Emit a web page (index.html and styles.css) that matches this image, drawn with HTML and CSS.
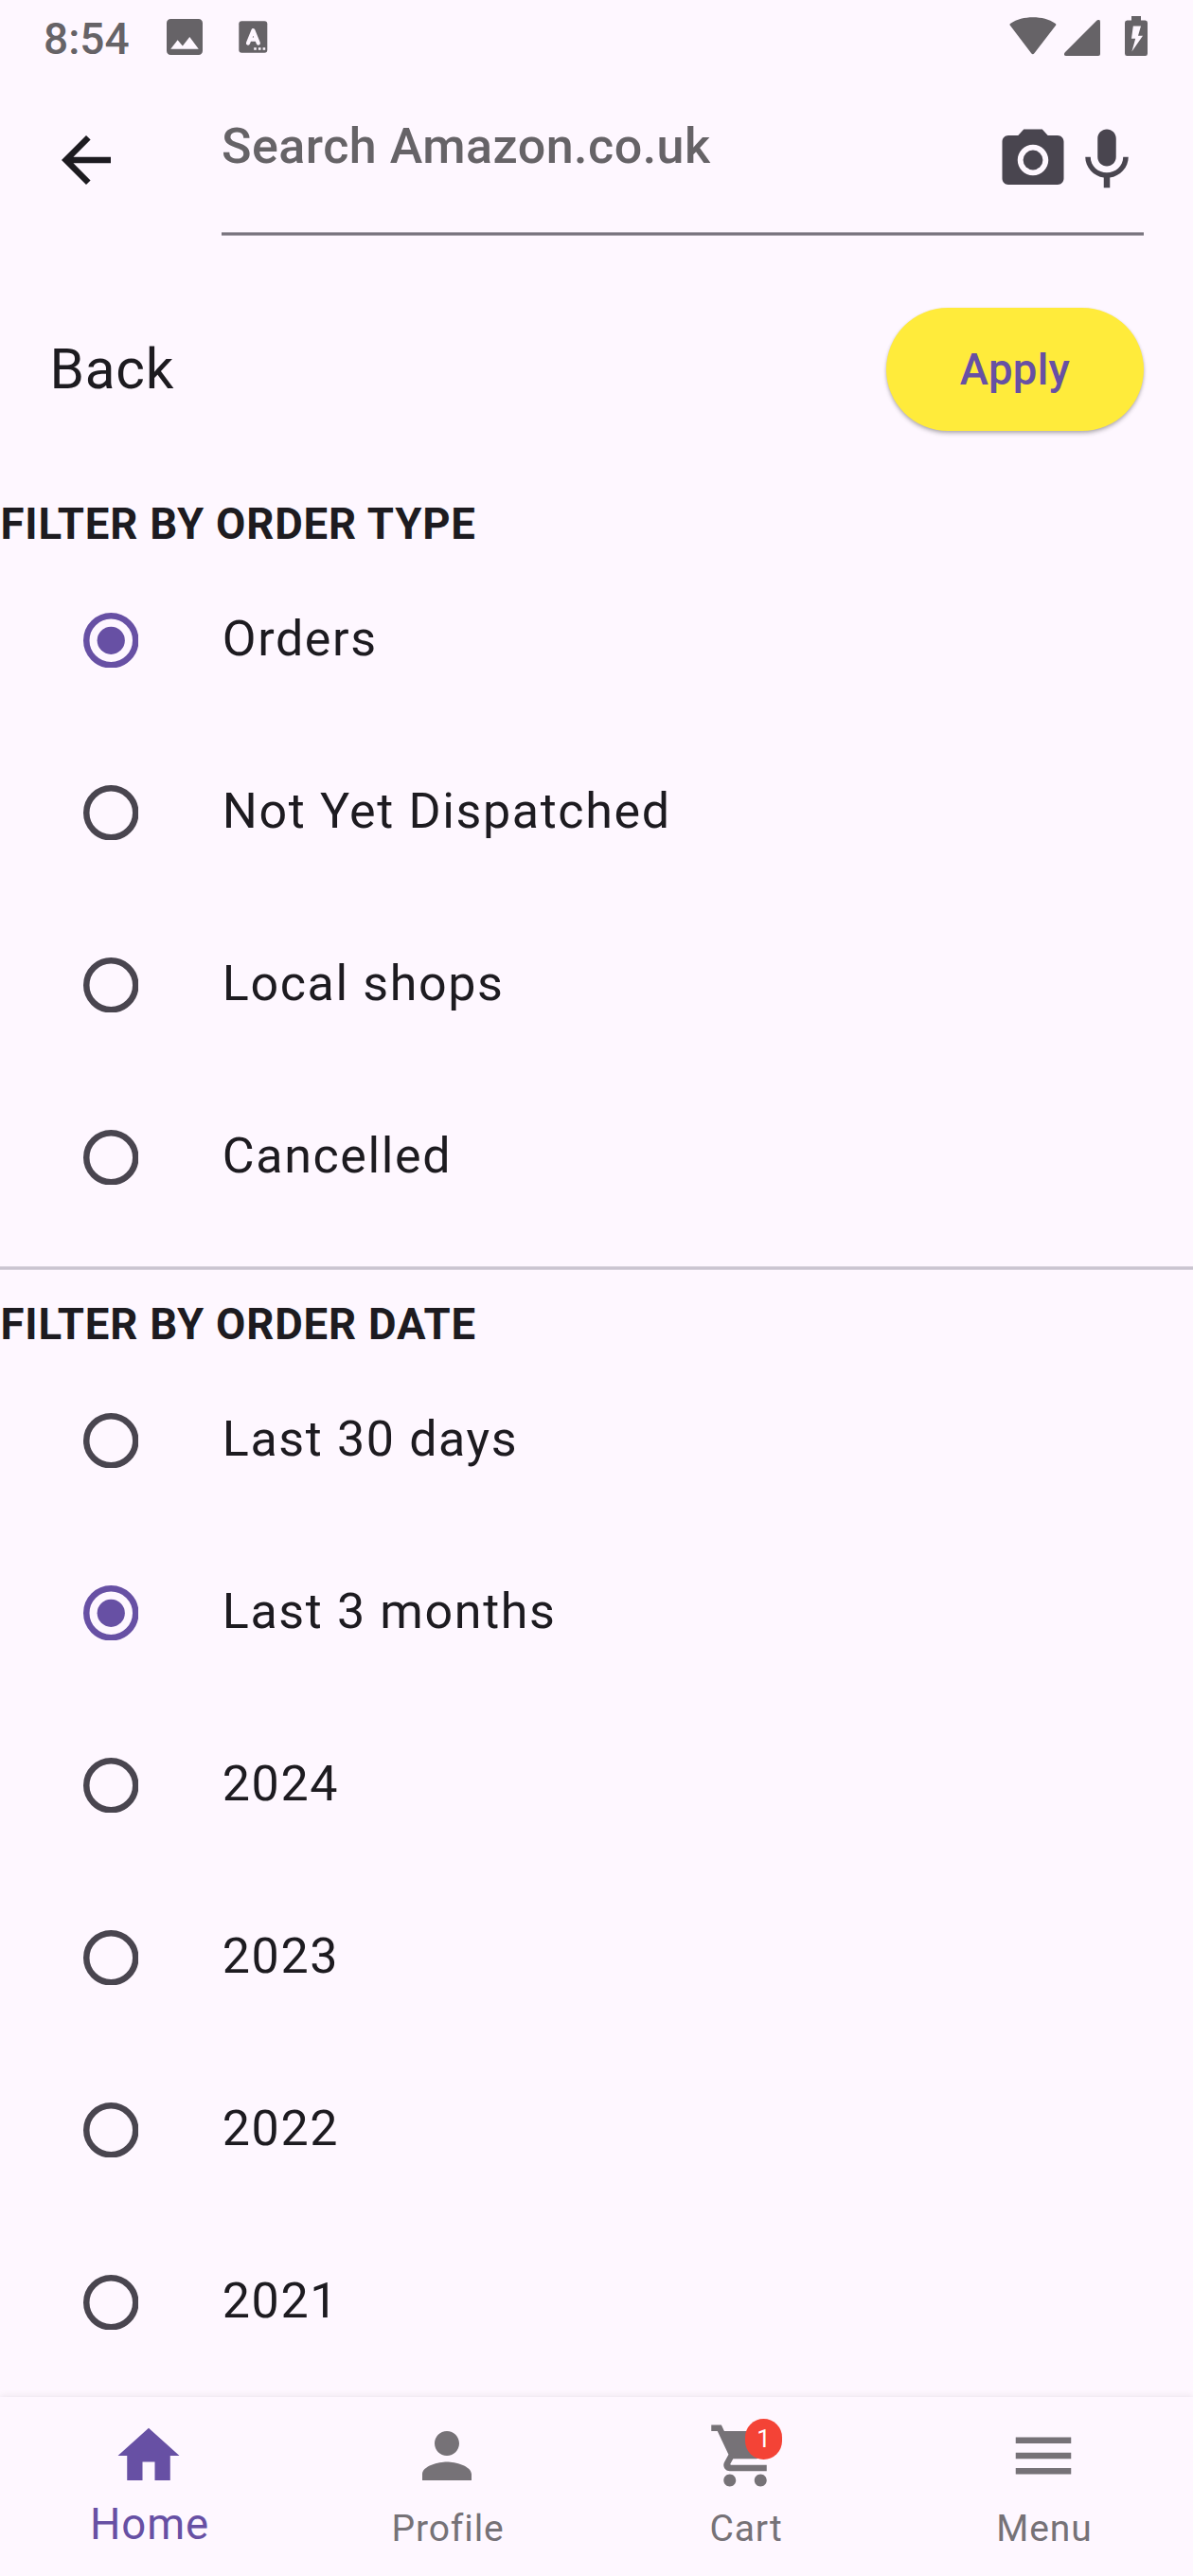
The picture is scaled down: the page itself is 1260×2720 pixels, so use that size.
FILE: index.html
```html
<!DOCTYPE html>
<html lang="en">
<head>
<meta charset="utf-8">
<title>Filter orders</title>
<link rel="stylesheet" href="styles.css">
</head>
<body>
<div class="screen">
  <div class="status">
    <span class="clock">8:54</span>
    <svg class="st-image" viewBox="3 3 18 18"><path d="M21 19V5c0-1.100-.9-2-2-2H5c-1.100 0-2 .9-2 2v14c0 1.100.9 2 2 2h14c1.100 0 2-.9 2-2zM8.500 13.500l2.500 3.010L14.500 12l4.500 6H5l3.500-4.500z"/></svg>
    <svg class="st-lang" viewBox="0 0 31 34"><rect x=".3" y=".3" width="30" height="33.400" rx="3"/><path class="cut" d="M10 23.500 15.400 10.200 20.800 23.500M11.800 19.600h7.200"/><path class="dots" d="M16.200 28.200h2.600v2.600h-2.600zM20.900 28.200h2.600v2.600h-2.600zM25.600 28.200h2.600v2.600h-2.600z"/></svg>
    <svg class="st-wifi" viewBox="0 0 50 40"><path d="M1 9Q-.2 7.800 1.300 6.800C8 2.300 16 .3 25 .3s17 2 23.500 6.500q1.500 1 .4 2.200L26.400 38.300q-1.600 1.700-3.200 0z"/></svg>
    <svg class="st-signal" viewBox="0 0 38 38"><path d="M34.500.6Q38-1.500 38 2.500V36q0 2-2 2H2q-3.500-.6-1.200-3.800z"/></svg>
    <svg class="st-battery" viewBox="0 0 24 42"><path fill-rule="evenodd" d="M7 0h10v4.500h4.600Q24 4.500 24 7v32.500Q24 42 21.600 42H2.400Q0 42 0 39.500V7q0-2.500 2.400-2.500H7zM8.800 10.500 7 23.800h4.200L7.400 37.500 19 20.800h-5l3-10.300z"/></svg>
  </div>

  <header class="appbar">
    <svg class="icon back" viewBox="0 0 24 24"><path d="M20 11H7.830l5.590-5.590L12 4l-8 8 8 8 1.410-1.410L7.830 13H20v-2z"/></svg>
    <div class="search">
      <span class="hint">Search Amazon.co.uk</span>
      <div class="tools">
        <svg class="icon" viewBox="0 0 24 24"><circle cx="12" cy="12" r="3.200"/><path d="M9 2L7.170 4H4c-1.100 0-2 .9-2 2v12c0 1.100.9 2 2 2h16c1.100 0 2-.9 2-2V6c0-1.100-.9-2-2-2h-3.170L15 2H9zm3 15c-2.760 0-5-2.240-5-5s2.240-5 5-5 5 2.240 5 5-2.240 5-5 5z"/></svg>
        <svg class="icon" viewBox="0 0 24 24"><path d="M12 14c1.660 0 2.990-1.340 2.990-3L15 5c0-1.660-1.340-3-3-3S9 3.340 9 5v6c0 1.660 1.340 3 3 3zm5.300-3c0 3-2.540 5.100-5.300 5.100S6.700 14 6.700 11H5c0 3.410 2.720 6.230 6 6.720V21h2v-3.280c3.280-.48 6-3.300 6-6.720h-1.700z"/></svg>
      </div>
    </div>
  </header>

  <main class="content">
    <div class="actions">
      <span class="back-label">Back</span>
      <button class="apply" type="button">Apply</button>
    </div>

    <h2 class="heading">FILTER BY ORDER TYPE</h2>
    <div class="option"><svg class="radio on" viewBox="0 0 18 18"><circle cx="9" cy="9" r="8"/><circle class="dot" cx="9" cy="9" r="4.500"/></svg><span>Orders</span></div>
    <div class="option"><svg class="radio" viewBox="0 0 18 18"><circle cx="9" cy="9" r="8"/></svg><span>Not Yet Dispatched</span></div>
    <div class="option"><svg class="radio" viewBox="0 0 18 18"><circle cx="9" cy="9" r="8"/></svg><span>Local shops</span></div>
    <div class="option"><svg class="radio" viewBox="0 0 18 18"><circle cx="9" cy="9" r="8"/></svg><span>Cancelled</span></div>

    <div class="divider"></div>

    <h2 class="heading">FILTER BY ORDER DATE</h2>
    <div class="option"><svg class="radio" viewBox="0 0 18 18"><circle cx="9" cy="9" r="8"/></svg><span>Last 30 days</span></div>
    <div class="option"><svg class="radio on" viewBox="0 0 18 18"><circle cx="9" cy="9" r="8"/><circle class="dot" cx="9" cy="9" r="4.500"/></svg><span>Last 3 months</span></div>
    <div class="option"><svg class="radio" viewBox="0 0 18 18"><circle cx="9" cy="9" r="8"/></svg><span>2024</span></div>
    <div class="option"><svg class="radio" viewBox="0 0 18 18"><circle cx="9" cy="9" r="8"/></svg><span>2023</span></div>
    <div class="option"><svg class="radio" viewBox="0 0 18 18"><circle cx="9" cy="9" r="8"/></svg><span>2022</span></div>
    <div class="option"><svg class="radio" viewBox="0 0 18 18"><circle cx="9" cy="9" r="8"/></svg><span>2021</span></div>
  </main>

  <nav class="nav">
    <div class="tab active">
      <svg class="icon" viewBox="0 0 24 24"><path d="M10 20v-6h4v6h5v-8h3L12 3 2 12h3v8z"/></svg>
      <span>Home</span>
    </div>
    <div class="tab">
      <svg class="icon" viewBox="0 0 24 24"><path d="M12 12c2.210 0 4-1.790 4-4s-1.790-4-4-4-4 1.790-4 4 1.790 4 4 4zm0 2c-2.670 0-8 1.340-8 4v2h16v-2c0-2.660-5.330-4-8-4z"/></svg>
      <span>Profile</span>
    </div>
    <div class="tab">
      <div class="cart">
        <svg class="icon" viewBox="0 0 24 24"><path d="M7 18c-1.100 0-1.990.9-1.990 2S5.900 22 7 22s2-.9 2-2-.9-2-2-2zM1 2v2h2l3.600 7.590-1.350 2.450c-.16.280-.25.610-.25.960 0 1.100.9 2 2 2h12v-2H7.420c-.14 0-.25-.11-.25-.25l.03-.12.900-1.630h7.450c.75 0 1.410-.41 1.750-1.030l3.580-6.490c.08-.14.120-.31.120-.48 0-.55-.45-1-1-1H5.210l-.94-2H1zm16 16c-1.100 0-1.990.9-1.990 2s.89 2 1.990 2 2-.9 2-2-.9-2-2-2z"/></svg>
        <span class="badge">1</span>
      </div>
      <span>Cart</span>
    </div>
    <div class="tab">
      <svg class="icon" viewBox="0 0 24 24"><path d="M3 18h18v-2H3v2zm0-5h18v-2H3v2zm0-7v2h18V6H3z"/></svg>
      <span>Menu</span>
    </div>
  </nav>
</div>
</body>
</html>
```
FILE: styles.css
```css
* { box-sizing: border-box; }

body {
  margin: 0;
  background: #fef7ff;
  color: #1d1b20;
  font-family: Roboto, "Noto Sans", sans-serif;
}

svg { display: block; flex: none; fill: currentColor; }

.screen {
  display: flex;
  flex-direction: column;
  width: 1260px;
  height: 2720px;
  overflow: hidden;
}

.icon { width: 78px; height: 78px; }

/* status bar */
.status {
  display: flex;
  align-items: flex-start;
  height: 78px;
  padding: 0 48px 0 46px;
  color: #666367;
}
.clock {
  width: 130px;
  padding-top: 13px;
  font-size: 46px;
  line-height: 56px;
  font-weight: 500;
}
.st-image { width: 38px; height: 38px; margin-top: 20px; }
.st-lang { width: 31px; height: 34px; margin: 22px 0 0 38px; }
.st-lang .cut {
  fill: none;
  stroke: #fef7ff;
  stroke-width: 4.2;
  stroke-linecap: round;
  stroke-linejoin: round;
}
.st-lang .dots { fill: #fef7ff; }
.st-wifi { width: 50px; height: 40px; margin: 18px 0 0 auto; }
.st-signal { width: 38px; height: 38px; margin: 21px 0 0 8px; }
.st-battery { width: 24px; height: 42px; margin: 17px 0 0 26px; }

/* search bar */
.appbar {
  display: flex;
  height: 182px;
  padding: 0 52px;
}
.back { margin-top: 52px; }
.search {
  display: flex;
  justify-content: space-between;
  width: 974px;
  height: 171px;
  margin-left: 104px;
  background: linear-gradient(#a9a4ad 0 1px, #79747e 1px 3px, #a9a4ad 3px) bottom / 100% 4px no-repeat;
}
.hint {
  padding-top: 38px;
  font-size: 52px;
  line-height: 78px;
  font-weight: 500;
  letter-spacing: .4875px;
  color: #666367;
}
.tools { display: flex; padding-top: 52px; color: #49454f; }

/* filter page */
.content { flex: 1; min-height: 0; overflow: hidden; }
.actions {
  display: flex;
  align-items: center;
  justify-content: space-between;
  height: 260px;
  padding: 0 52px;
}
.back-label {
  padding-left: .5px;
  font-size: 58.5px;
  line-height: 78px;
  letter-spacing: .8px;
}
.apply {
  width: 272px;
  height: 130px;
  padding: 0;
  border: 0;
  border-radius: 65px;
  background: #ffeb3b;
  box-shadow: 0 3px 4px rgba(0, 0, 0, .22), 0 1px 3px rgba(0, 0, 0, .12);
  color: #6750a4;
  font: 500 45.5px/65px Roboto, "Noto Sans", sans-serif;
  letter-spacing: .325px;
}
.heading {
  margin: 0;
  padding: 1px 0 0 .5px;
  height: 65px;
  font-size: 45.5px;
  line-height: 65px;
  font-weight: 700;
  letter-spacing: .8125px;
}
.option {
  display: flex;
  align-items: center;
  height: 182px;
  padding-left: 87.5px;
  font-size: 52px;
  line-height: 78px;
  letter-spacing: 1.625px;
}
.option span { margin: -3px 0 0 88.75px; }
.radio {
  width: 58.5px;
  height: 58.5px;
  fill: none;
  stroke: #49454f;
  stroke-width: 2;
}
.radio.on { stroke: #6750a4; }
.radio .dot { fill: #6750a4; stroke: none; }
.divider {
  height: 52px;
  background: linear-gradient(#d7d1dc 0 1px, #cac4d0 1px 3px, #d7d1dc 3px) center / 100% 4px no-repeat;
}

/* bottom navigation */
.nav {
  display: flex;
  flex: none;
  height: 189px;
  background: #fef7ff;
  box-shadow: 0 -1px 7px rgba(0, 0, 0, .08);
}
.tab {
  display: flex;
  flex: 1;
  flex-direction: column;
  align-items: center;
  padding: 23px 1px 0 0;
  color: #767277;
  font-size: 39px;
  line-height: 52px;
  letter-spacing: .9px;
}
.tab > span { margin: 12px 0 0 2px; }
.tab.active { color: #6750a4; font-size: 45.5px; }
.tab.active > span { margin-top: 8px; }
.cart { position: relative; }
.badge {
  position: absolute;
  top: 0;
  right: 0;
  width: 39px;
  height: 43px;
  border-radius: 19.5px;
  background: #f44336;
  color: #fff;
  font-size: 26px;
  line-height: 43px;
  letter-spacing: 0;
  text-align: center;
}
```
